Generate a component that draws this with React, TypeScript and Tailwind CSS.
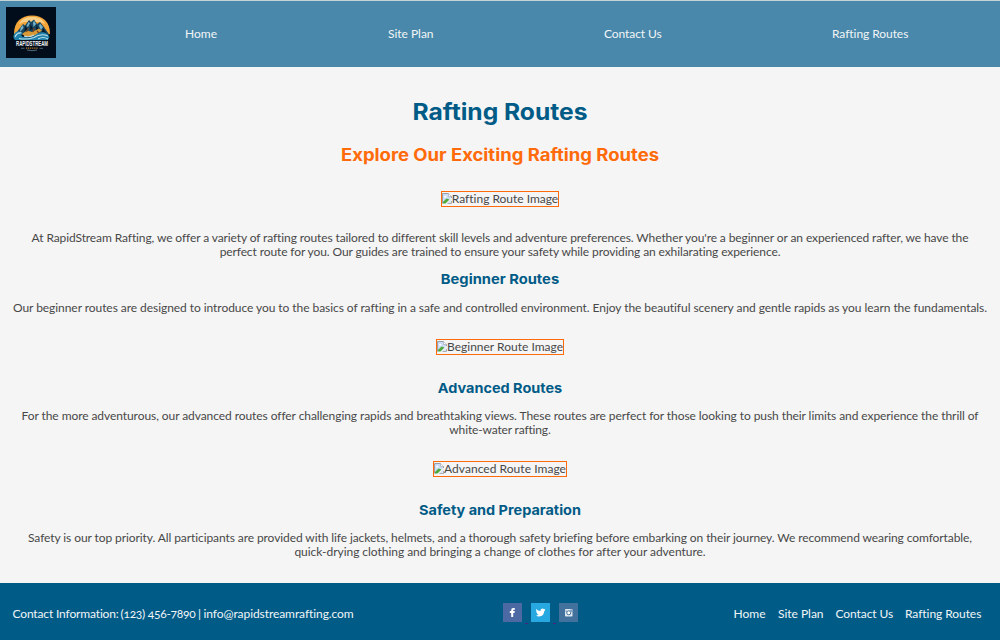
import type { ReactNode } from "react";

function Logo() {
  return (
    <svg viewBox="0 0 50 51" className="block h-[51px] w-[50px] shrink-0 overflow-visible" aria-label="RapidStream Rafting">
      <rect width="50" height="51" fill="#020d1b" />
      <path d="M8 27C8 15 15 8.5 26 8.5S44 15 44 27Z" fill="#f2a63a" />
      <path d="M13 17C16 11.5 20 10 26 10S36 11.5 39 17L34 15H18Z" fill="#f9cf86" />
      <path d="M8.5 28L14 21L17 17L19 18.5L23 13L25 15L28 12.5L31 17L34 15L38 20L43.5 28Z" fill="#17445f" />
      <path d="M14.5 21L17 18L17.5 21L14 25ZM22.5 15L24 16L22 20L20.5 19ZM28 13.5L30 17L27.5 20L27 16ZM34 16.5L37 20L35 23L33 19Z" fill="#78b3ca" />
      <path d="M19 19L21.5 22L18.5 25ZM24.5 17L27 22L24 23ZM30.5 18L33 23L30 24ZM37 21L40 26L36 25Z" fill="#061827" />
      <path d="M16 27L21 23.5L26 25L33 21.5L36 23.5L29 28.5L20 30Z" fill="#d99a36" />
      <path d="M20.5 25L22.5 21M27 25L28 21M31 24L34 27" stroke="#74401f" strokeWidth="1.2" />
      <path d="M7.5 31C7 25 12 22.5 17 26Q14 27 16 29.5Q23 32 28 29C34 24 40 24 43.5 30L42 33H9Z" fill="#2180a9" />
      <path d="M9 30Q11 25 15.5 26M13 31.5Q21 33 28 30.5Q35 26 42 29M18 29Q23 31 28 28M32 32Q37 29 42 32" stroke="#bddfe9" strokeWidth="1.1" fill="none" />
      <text x="10" y="39" textLength="32" lengthAdjust="spacingAndGlyphs" fill="#f0f3f4" fontFamily="Liberation Sans, sans-serif" fontSize="7.4" fontWeight="700">RAPIDSTREAM</text>
      <path d="M15 41.3H18.5M33.5 41.3H37" stroke="#577e91" strokeWidth=".8" />
      <path d="M20 41.2H32" stroke="#b57a2b" strokeWidth="1.2" strokeDasharray="1.2 .7" />
      <path d="M21 43Q26 44.4 31 43" stroke="#8ca8b3" strokeWidth=".6" fill="none" />
    </svg>
  );
}

function BrokenImage({ children }: { children: ReactNode }) {
  return (
    <div className="mx-auto flex h-4 w-fit items-center border border-[#ff6a0a] leading-[14px]">
      <svg viewBox="0 0 10 14" className="block h-[14px] w-[10px] shrink-0">
        <path d="M0.5 11.5V1.5H6.5L9.5 4.5V6" fill="#cbdcf6" stroke="#9a9da3" strokeWidth="1" />
        <path d="M6.5 1.5V4.5H9.5" fill="#fff" stroke="#a9acb2" strokeWidth=".7" />
        <path d="M2 4.5Q3 3 4.5 4.5V5.5H2Z" fill="#fff" />
        <path d="M1 11.5V10L4.5 6.5L7.5 7.5L3.5 11.5Z" fill="#4ea83c" />
        <path d="M4.5 11.5L9.5 7V11.5Z" fill="#dce5f3" />
        <path d="M5.5 11.5H9.5V9" fill="none" stroke="#9a9da3" strokeWidth=".8" />
      </svg>
      {children}
    </div>
  );
}

function Line({ children, className }: { children: ReactNode; className: string }) {
  return <span className={`block whitespace-nowrap ${className}`}>{children}</span>;
}

const h3 = "h-[18px] font-['Inter',sans-serif] text-[13.5px] leading-[18px] font-bold whitespace-nowrap text-[#005b87]";

export default function App() {
  return (
    <div className="h-[640px] w-[1000px] overflow-hidden bg-[#f5f5f5] font-['Lato',sans-serif] text-[12px] leading-[14px] text-[#484848]">
      <header className="flex h-[67px] items-start border-t border-[#c5d3d6] bg-[#4988aa] pl-1.5 text-[#f2f5f7]">
        <div className="mt-1.5"><Logo /></div>
        <nav className="mt-[26px] ml-[129px] flex whitespace-nowrap">
          <a className="w-[203px]">Home</a>
          <a className="w-[216px] tracking-[-0.02px]">Site Plan</a>
          <a className="w-[228px] tracking-[-0.09px]">Contact Us</a>
          <a className="tracking-[-0.06px]">Rafting Routes</a>
        </nav>
      </header>

      <main className="h-[516px] pt-[31px] text-center">
        <h1 className="h-7 scale-x-[1.07] font-['Inter',sans-serif] text-[23px] leading-7 font-bold text-[#005b87]">Rafting Routes</h1>
        <h2 className="mt-[18px] h-[22px] scale-x-[1.086] font-['Inter',sans-serif] text-[17px] leading-[22px] font-bold text-[#ff6a0a]">
          Explore Our Exciting Rafting Routes
        </h2>
        <div className="mt-[25px]">
          <BrokenImage><span className="tracking-[-0.015px]">Rafting Route Image</span></BrokenImage>
        </div>
        <p className="mt-6">
          <Line className="tracking-[-0.105px]">
            At RapidStream Rafting, we offer a variety of rafting routes tailored to different skill levels and adventure preferences. Whether you're a beginner or an experienced rafter, we have the
          </Line>
          <Line className="tracking-[-0.105px]">
            perfect route for you. Our guides are trained to ensure your safety while providing an exhilarating experience.
          </Line>
        </p>
        <h3 className={`mt-[11px] scale-x-[1.09] ${h3}`}>Beginner Routes</h3>
        <p className="mt-[13px]">
          <Line className="tracking-[-0.058px]">
            Our beginner routes are designed to introduce you to the basics of rafting in a safe and controlled environment. Enjoy the beautiful scenery and gentle rapids as you learn the fundamentals.
          </Line>
        </p>
        <div className="mt-6">
          <BrokenImage><span className="tracking-[0.003px]">Beginner Route Image</span></BrokenImage>
        </div>
        <h3 className={`mt-6 scale-x-[1.07] ${h3}`}>Advanced Routes</h3>
        <p className="mt-3">
          <Line className="tracking-[-0.072px]">
            For the more adventurous, our advanced routes offer challenging rapids and breathtaking views. These routes are perfect for those looking to push their limits and experience the thrill of
          </Line>
          <Line className="tracking-[-0.156px]">white-water rafting.</Line>
        </p>
        <div className="mt-6">
          <BrokenImage><span className="tracking-[0.046px]">Advanced Route Image</span></BrokenImage>
        </div>
        <h3 className={`mt-6 scale-x-[1.071] ${h3}`}>Safety and Preparation</h3>
        <p className="mt-3">
          <Line className="tracking-[-0.088px]">
            Safety is our top priority. All participants are provided with life jackets, helmets, and a thorough safety briefing before embarking on their journey. We recommend wearing comfortable,
          </Line>
          <Line className="tracking-[-0.04px]">quick-drying clothing and bringing a change of clothes for after your adventure.</Line>
        </p>
      </main>

      <footer className="flex h-[57px] items-start bg-[#005b87] pl-[12.5px] whitespace-nowrap text-[#f2f5f7]">
        <div className="mt-6 flex w-[490.5px]">
          <span className="w-[108px] tracking-[-0.15px]">Contact Information:</span>
          <span className="w-[77.5px] tracking-[-0.27px] oldstyle-nums">(123) 456-7890</span>
          <span className="w-[5.5px]">|</span>
          <span className="tracking-[-0.08px]">info@rapidstreamrafting.com</span>
        </div>
        <div className="mt-5 flex h-[21px]">
          <svg viewBox="0 0 19 19" className="h-[19px] w-[19px]">
            <rect width="19" height="19" fill="#4c69a4" />
            <path d="M8.2 14V10H6.8V8H8.2V7Q8.2 5 10.2 5H11.8V6.8H10.8Q10.2 6.8 10.2 7.4V8H11.8L11.5 10H10.2V14Z" fill="#fff" />
          </svg>
          <span className="mx-[3px] w-[3px] border-b border-[#4c2183]" />
          <svg viewBox="0 0 19 19" className="h-[19px] w-[19px]">
            <rect width="19" height="19" fill="#27a8e1" />
            <path d="M5 6Q7 8.1 9.5 8.1Q9.2 5.7 11.4 5.6Q12.2 5.5 12.9 6.2L14.3 5.8L13.7 7L14.4 6.9L13.3 8Q13.1 13.4 8 13.4Q6.2 13.4 5 12.5Q6.7 12.5 7.6 11.8Q6.3 11.6 5.8 10.5H6.6Q5.1 9.9 5.1 8.3L5.9 8.5Q4.6 7.4 5 6Z" fill="#fff" />
          </svg>
          <span className="mx-[3px] w-[3px] border-b border-[#4c2183]" />
          <svg viewBox="0 0 19 19" className="h-[19px] w-[19px]">
            <rect width="19" height="19" fill="#41719c" />
            <rect x="6" y="6" width="7.5" height="7.5" rx=".8" fill="#dfe8ee" />
            <path d="M6.5 8.2H8M12 8.2H13.5" stroke="#41719c" strokeWidth=".8" />
            <circle cx="9.75" cy="9.8" r="2" fill="#fff" stroke="#41719c" strokeWidth="1" />
            <rect x="11.4" y="6.6" width="1.3" height="1.2" fill="#41719c" />
          </svg>
        </div>
        <nav className="mt-6 ml-[155.5px] flex">
          <a className="w-[44.5px]">Home</a>
          <a className="w-[57.5px] tracking-[-0.02px]">Site Plan</a>
          <a className="w-[69.5px] tracking-[-0.09px]">Contact Us</a>
          <a className="tracking-[-0.06px]">Rafting Routes</a>
        </nav>
      </footer>
    </div>
  );
}
